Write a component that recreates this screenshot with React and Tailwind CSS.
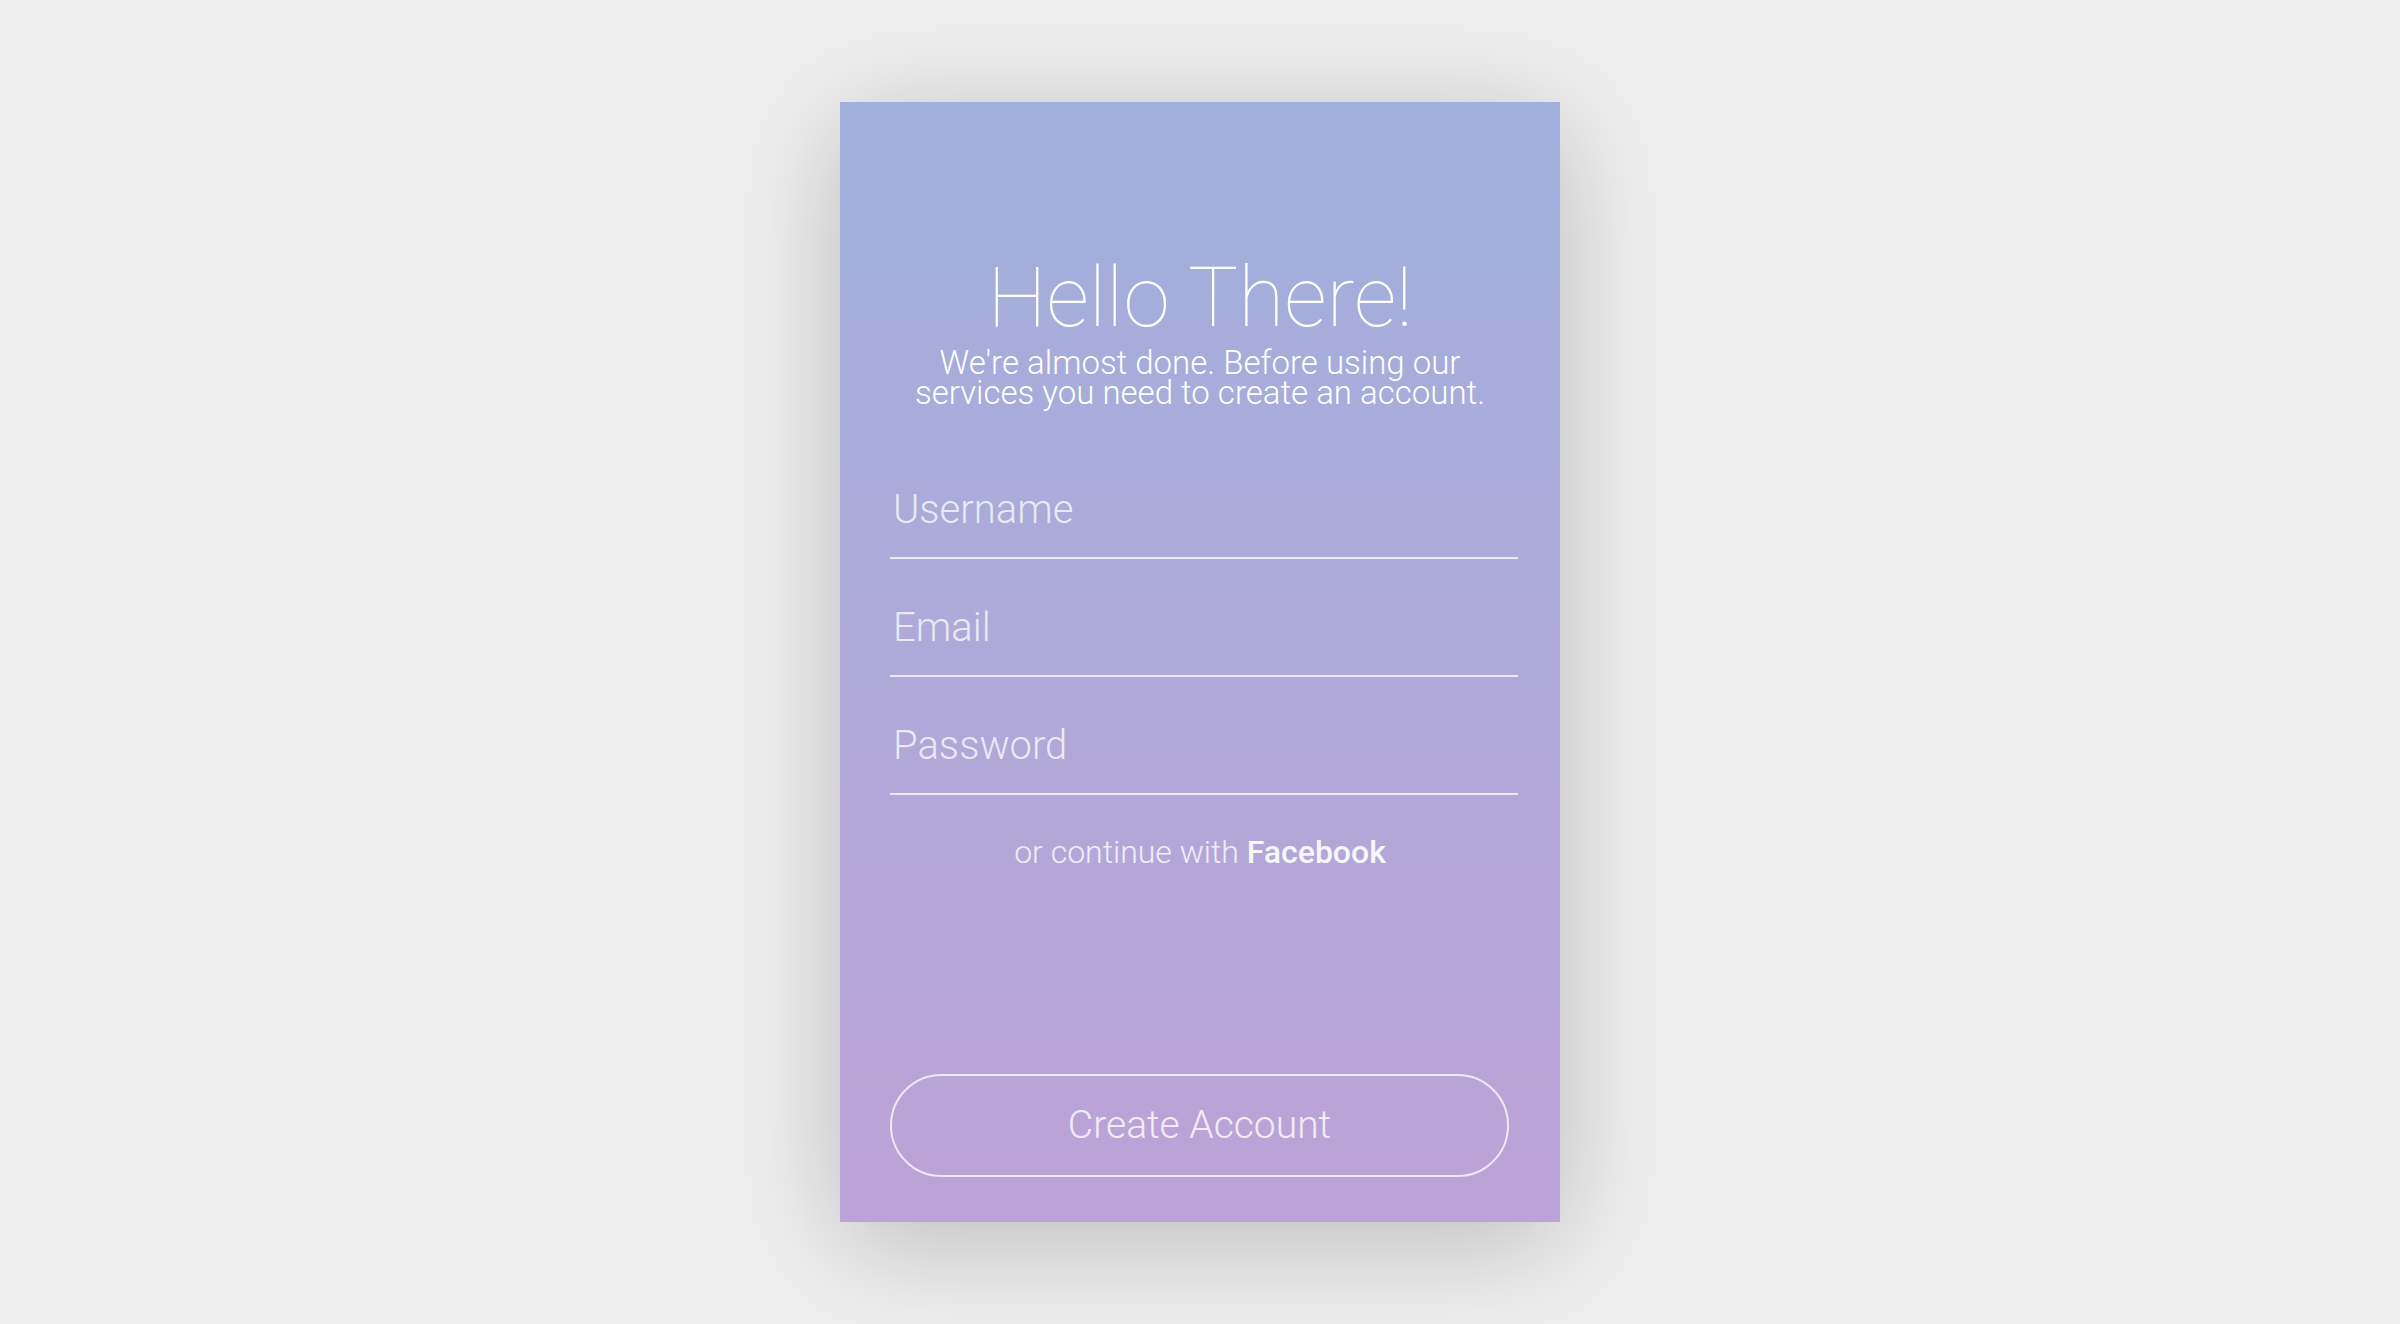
export default function App() {
  const inputCls =
    "block w-[628px] h-[73px] pt-0 pb-[25px] px-[3px] bg-transparent border-0 border-b-2 border-solid border-white/75 text-[40px] leading-[46px] font-light text-white placeholder:text-white/75 outline-none";
  return (
    <div
      className="w-full h-screen bg-[#efefef] flex items-center justify-center"
      style={{ fontFamily: "Roboto, 'Liberation Sans', sans-serif" }}
    >
      <div className="w-[720px] h-[1120px] flex flex-col items-center pt-[154px] pb-[45px] px-[50px] bg-gradient-to-b from-[#a0b0dc] to-[#bca2d6] shadow-[0_20px_110px_rgba(0,0,0,0.22)]">
        <h1 className="text-[84px] leading-[84px] font-thin text-white text-center m-0">
          Hello There!
        </h1>
        <p className="mt-[8px] text-[33px] leading-[30px] font-light text-white text-center">
          We're almost done. Before using our
          <br />
          services you need to create an account.
        </p>
        <div className="self-start mt-[78px] flex flex-col gap-[45px]">
          <input className={inputCls} placeholder="Username" />
          <input className={inputCls} placeholder="Email" />
          <input className={inputCls} placeholder="Password" type="password" />
        </div>
        <p className="mt-[39px] text-[32px] leading-[36px] font-light text-white/80 text-center">
          or continue with <span className="font-medium text-white/90">Facebook</span>
        </p>
        <button className="mt-auto self-start w-[619px] h-[103px] rounded-full border-2 border-solid border-white/75 bg-transparent text-[39px] font-light text-white/80 flex items-center justify-center">
          Create Account
        </button>
      </div>
    </div>
  );
}
